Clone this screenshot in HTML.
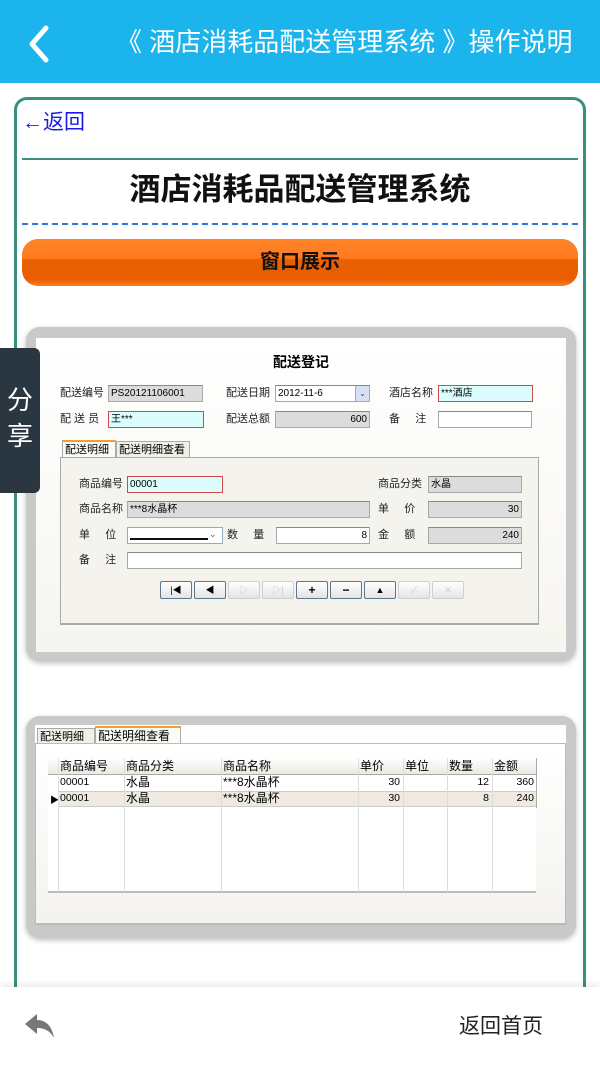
<!DOCTYPE html>
<html><head><meta charset="utf-8"><style>
*{margin:0;padding:0;box-sizing:border-box}
body{width:600px;height:1067px;overflow:hidden;background:#fff;font-family:"Liberation Sans","Noto Sans CJK SC",sans-serif;position:relative}
.a{position:absolute}
.hdr{left:0;top:0;width:600px;height:83px;background:#1bb4ec}
.card{left:14px;top:97px;width:572px;height:960px;border:3px solid #3b8f80;border-radius:13px}
.f{font-size:11px;color:#222;font-family:"Liberation Sans","Noto Sans CJK SC",sans-serif;white-space:nowrap;line-height:16px}
.in{height:17px;border:1px solid #a8a8a8;border-top-color:#888;background:#fff;font-size:10px;line-height:15px;padding:0 2px;font-family:"Liberation Sans","Noto Sans CJK SC",sans-serif;white-space:nowrap}
.g{background:#dcdcdc}
.r{border:1.5px solid #d04848;background:#dcfdfd}
.rt{text-align:right}
.btn{width:32px;height:18px;border:1px solid #5e7690;border-radius:2px;background:linear-gradient(#fff,#e4e4e4);font-size:9px;text-align:center;line-height:16px;color:#000}
.dis{border-color:#cfcfcf;color:#ccc}
.tab{height:17px;border:1px solid #aaa;border-bottom:none;background:#f0efe8;font-size:11px;line-height:16px;padding:0 2px;white-space:nowrap;overflow:hidden}
.sel{border-top:2px solid #f0a030;background:#fbfaf5}
.cell{font-size:10.5px;line-height:16px;height:16px;white-space:nowrap}
</style></head><body>
<div class="a hdr"></div>
<svg class="a" style="left:26px;top:24px" width="26" height="40" viewBox="0 0 26 40"><path d="M20 4 L6 20 L20 36" fill="none" stroke="#fff" stroke-width="5" stroke-linecap="round" stroke-linejoin="round"/></svg>
<div class="a" style="left:116px;top:24px;font-size:26px;color:#fff;white-space:nowrap;line-height:36px">《 酒店消耗品配送管理系统 》操作说明</div>

<div class="a card"></div>
<div class="a" style="left:22px;top:109px;font-size:21px;color:#1a1ae8;line-height:28px">←返回</div>
<div class="a" style="left:22px;top:158px;width:556px;height:2px;background:#3b8f80"></div>
<div class="a" style="left:0;width:600px;top:170px;text-align:center;font-size:31px;font-weight:bold;color:#111;line-height:40px">酒店消耗品配送管理系统</div>
<div class="a" style="left:22px;top:223px;width:556px;border-top:2px dashed #2a78d8"></div>
<div class="a" style="left:22px;top:239px;width:556px;height:47px;border-radius:16px;background:linear-gradient(#ff8428 0%,#ff7a20 40%,#e86000 45%,#e85e00 85%,#ff7a20 100%);text-align:center;font-size:20px;font-weight:bold;line-height:47px;color:#111">窗口展示</div>

<!-- screenshot 1 -->
<div class="a" style="left:26px;top:327px;width:550px;height:334px;border-radius:14px;background:#c9c9c9;box-shadow:0 2px 6px #bbb"></div>
<div class="a" style="left:36px;top:338px;width:530px;height:314px;background:linear-gradient(#fff,#f6f5f0)"></div>
<div class="a" style="left:36px;top:352px;width:530px;text-align:center;font-size:14px;font-weight:bold;line-height:20px">配送登记</div>
<div class="a f" style="left:60px;top:385px">配送编号</div>
<div class="a in g" style="left:108px;top:385px;width:95px">PS20121106001</div>
<div class="a f" style="left:226px;top:385px">配送日期</div>
<div class="a in" style="left:275px;top:385px;width:81px">2012-11-6</div>
<div class="a in" style="left:355px;top:385px;width:15px;background:#d6e2f4;color:#345;text-align:center;font-size:8px">⌄</div>
<div class="a f" style="left:389px;top:385px">酒店名称</div>
<div class="a in r" style="left:438px;top:385px;width:95px">***酒店</div>
<div class="a f" style="left:60px;top:411px">配 送 员</div>
<div class="a in r" style="left:108px;top:411px;width:96px">王***</div>
<div class="a f" style="left:226px;top:411px">配送总额</div>
<div class="a in g rt" style="left:275px;top:411px;width:95px">600</div>
<div class="a f" style="left:389px;top:411px">备&nbsp;&nbsp;&nbsp;&nbsp;&nbsp;注</div>
<div class="a in" style="left:438px;top:411px;width:94px"></div>
<div class="a tab sel" style="left:62px;top:440px;width:54px">配送明细</div>
<div class="a tab" style="left:116px;top:441px;width:74px">配送明细查看</div>
<div class="a" style="left:60px;top:457px;width:479px;height:168px;border:1px solid #aaa;border-bottom:2px solid #aaa;background:#f4f3ee"></div>
<div class="a f" style="left:79px;top:476px">商品编号</div>
<div class="a in r" style="left:127px;top:476px;width:96px">00001</div>
<div class="a f" style="left:378px;top:476px">商品分类</div>
<div class="a in g" style="left:428px;top:476px;width:94px">水晶</div>
<div class="a f" style="left:79px;top:501px">商品名称</div>
<div class="a in g" style="left:127px;top:501px;width:243px">***8水晶杯</div>
<div class="a f" style="left:378px;top:501px">单&nbsp;&nbsp;&nbsp;&nbsp;&nbsp;价</div>
<div class="a in g rt" style="left:428px;top:501px;width:94px">30</div>
<div class="a f" style="left:79px;top:527px">单&nbsp;&nbsp;&nbsp;&nbsp;&nbsp;位</div>
<div class="a in" style="left:127px;top:527px;width:96px;border-color:#9ab"><div style="margin-top:10px;width:78px;border-top:2px solid #111"></div></div>
<div class="a" style="left:209px;top:529px;font-size:9px;color:#567">⌄</div>
<div class="a f" style="left:227px;top:527px">数&nbsp;&nbsp;&nbsp;&nbsp;&nbsp;量</div>
<div class="a in rt" style="left:276px;top:527px;width:94px">8</div>
<div class="a f" style="left:378px;top:527px">金&nbsp;&nbsp;&nbsp;&nbsp;&nbsp;额</div>
<div class="a in g rt" style="left:428px;top:527px;width:94px">240</div>
<div class="a f" style="left:79px;top:552px">备&nbsp;&nbsp;&nbsp;&nbsp;&nbsp;注</div>
<div class="a in" style="left:127px;top:552px;width:395px"></div>
<div class="a btn" style="left:160px;top:581px">|◀</div>
<div class="a btn" style="left:194px;top:581px">◀</div>
<div class="a btn dis" style="left:228px;top:581px">▷</div>
<div class="a btn dis" style="left:262px;top:581px">▷|</div>
<div class="a btn" style="left:296px;top:581px;font-weight:bold;font-size:12px">+</div>
<div class="a btn" style="left:330px;top:581px;font-weight:bold;font-size:12px">−</div>
<div class="a btn" style="left:364px;top:581px">▲</div>
<div class="a btn dis" style="left:398px;top:581px">✓</div>
<div class="a btn dis" style="left:432px;top:581px">✕</div>

<!-- screenshot 2 -->
<div class="a" style="left:26px;top:716px;width:550px;height:222px;border-radius:14px;background:#c9c9c9;box-shadow:0 2px 6px #bbb"></div>
<div class="a" style="left:35px;top:725px;width:531px;height:200px;background:linear-gradient(#fff,#f3f2ec)"></div>
<div class="a tab" style="left:37px;top:728px;width:58px">配送明细</div>
<div class="a tab sel" style="left:95px;top:726px;width:86px;font-size:12px">配送明细查看</div>
<div class="a" style="left:35px;top:743px;width:531px;height:182px;border:1px solid #bbb;border-bottom:2px solid #bbb;background:linear-gradient(#fff,#f4f3ee)"></div>
<div class="a" style="left:48px;top:758px;width:488px;height:135px;background:#fff;border-bottom:2px solid #bbb"></div>
<div class="a" style="left:48px;top:758px;width:488px;height:17px;background:linear-gradient(#fff,#ebe9e0);border-bottom:1px solid #aaa"></div>
<div class="a" style="left:58px;top:791px;width:478px;height:16px;background:#eeebde;border-top:1px solid #ccc;border-bottom:1px solid #ccc"></div>
<div class="a" style="left:50px;top:793px;font-size:9px">▶</div>
<div class="a" style="left:58px;top:758px;width:1px;height:134px;background:#ddd"></div>
<div class="a" style="left:124px;top:758px;width:1px;height:134px;background:#ddd"></div>
<div class="a" style="left:221px;top:758px;width:1px;height:134px;background:#ddd"></div>
<div class="a" style="left:358px;top:758px;width:1px;height:134px;background:#ddd"></div>
<div class="a" style="left:403px;top:758px;width:1px;height:134px;background:#ddd"></div>
<div class="a" style="left:447px;top:758px;width:1px;height:134px;background:#ddd"></div>
<div class="a" style="left:492px;top:758px;width:1px;height:134px;background:#ddd"></div>
<div class="a" style="left:536px;top:758px;width:1px;height:50px;background:#aaa"></div>
<div class="a cell" style="left:60px;top:758px;font-size:12px">商品编号</div>
<div class="a cell" style="left:126px;top:758px;font-size:12px">商品分类</div>
<div class="a cell" style="left:223px;top:758px;font-size:12px">商品名称</div>
<div class="a cell" style="left:360px;top:758px;font-size:12px">单价</div>
<div class="a cell" style="left:405px;top:758px;font-size:12px">单位</div>
<div class="a cell" style="left:449px;top:758px;font-size:12px">数量</div>
<div class="a cell" style="left:494px;top:758px;font-size:12px">金额</div>
<div class="a cell" style="left:60px;top:774px">00001</div>
<div class="a cell" style="left:126px;top:774px;font-size:12px">水晶</div>
<div class="a cell" style="left:223px;top:774px;font-size:12px">***8水晶杯</div>
<div class="a cell" style="left:358px;top:774px;width:42px;text-align:right">30</div>
<div class="a cell" style="left:447px;top:774px;width:42px;text-align:right">12</div>
<div class="a cell" style="left:492px;top:774px;width:42px;text-align:right">360</div>
<div class="a cell" style="left:60px;top:790px">00001</div>
<div class="a cell" style="left:126px;top:790px;font-size:12px">水晶</div>
<div class="a cell" style="left:223px;top:790px;font-size:12px">***8水晶杯</div>
<div class="a cell" style="left:358px;top:790px;width:42px;text-align:right">30</div>
<div class="a cell" style="left:447px;top:790px;width:42px;text-align:right">8</div>
<div class="a cell" style="left:492px;top:790px;width:42px;text-align:right">240</div>

<!-- share tab -->
<div class="a" style="left:0;top:348px;width:40px;height:145px;background:#2b3740;border-radius:0 6px 6px 0"></div>
<div class="a" style="left:7px;top:382px;font-size:26px;color:#fff;line-height:36px;width:30px">分<br>享</div>

<!-- bottom bar -->
<div class="a" style="left:0;top:987px;width:600px;height:80px;background:#fff;box-shadow:0 -3px 6px rgba(0,0,0,0.08)"></div>
<svg class="a" style="left:24px;top:1012px" width="32" height="30" viewBox="0 0 32 30"><path d="M1 12 L13 2 L13 8 C22 8 28 14 30 26 C26 19 21 16 13 16 L13 22 Z" fill="#777"/></svg>
<div class="a" style="left:459px;top:1012px;font-size:21px;color:#222;line-height:30px">返回首页</div>
</body></html>
